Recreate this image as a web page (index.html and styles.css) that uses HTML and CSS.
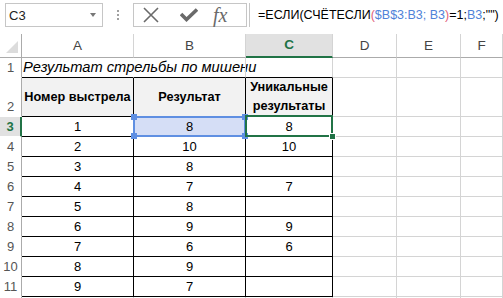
FILE: index.html
```html
<!DOCTYPE html>
<html lang="ru">
<head>
    <meta charset="UTF-8">
    <title>Уникальные результаты</title>
    <link rel="stylesheet" href="styles.css">
</head>
<body>
    <div class="toolbar">
        <div class="namebox">
            <span>C3</span>
            <span class="arrow"></span>
        </div>
        <div class="grip">
            <svg width="4" height="14" viewBox="0 0 4 14">
                <rect x="1" y="2" width="2" height="2" fill="#a0a0a0"/>
                <rect x="1" y="6" width="2" height="2" fill="#a0a0a0"/>
                <rect x="1" y="10" width="2" height="2" fill="#a0a0a0"/>
            </svg>
        </div>
        <div class="fxbtns">
            <svg class="btn-x" width="16" height="16" viewBox="0 0 16 16">
                <path d="M1 1 L15 15 M15 1 L1 15" stroke="#6a6a6a" stroke-width="1.6" fill="none"/>
            </svg>
            <svg class="btn-ok" width="18" height="14" viewBox="0 0 18 14">
                <path d="M1 6 L6.5 11.5 L17 1.5" stroke="#6a6a6a" stroke-width="3.6" fill="none"/>
            </svg>
            <span class="btn-fx">fx</span>
        </div>
        <div class="formula">=ЕСЛИ(СЧЁТЕСЛИ<span class="par">(</span><span class="ref">$B$3:B3; B3</span><span class="par">)</span>=1;<span class="ref">B3</span>;"")</div>
    </div>

    <div class="sheet">
        <div class="row head">
            <div class="cell corner">
                <svg width="21" height="23" viewBox="0 0 21 23"><polygon points="18,7 18,19 6,19" fill="#dcdcdc"/></svg>
            </div>
            <div class="cell ch">A</div>
            <div class="cell ch">B</div>
            <div class="cell ch sel">C</div>
            <div class="cell ch">D</div>
            <div class="cell ch">E</div>
            <div class="cell ch">F</div>
        </div>
        <div class="row">
            <div class="cell rh">1</div>
            <div class="cell title nr bb">Результат стрельбы по мишени</div>
            <div class="cell bb"></div>
            <div class="cell bb"></div>
            <div class="cell"></div>
            <div class="cell"></div>
            <div class="cell"></div>
        </div>
        <div class="row tall">
            <div class="cell rh">2</div>
            <div class="cell t hd">Номер выстрела</div>
            <div class="cell t hd">Результат</div>
            <div class="cell t hd wrap">Уникальные результаты</div>
            <div class="cell"></div>
            <div class="cell"></div>
            <div class="cell"></div>
        </div>
        <div class="row">
            <div class="cell rh sel">3</div>
            <div class="cell t">1</div>
            <div class="cell t range">8
                <span class="hl"></span>
                <span class="knob k-tl"></span><span class="knob k-tr"></span>
                <span class="knob k-bl"></span><span class="knob k-br"></span>
            </div>
            <div class="cell t active">8
                <span class="frame"></span>
                <span class="fill-handle"></span>
            </div>
            <div class="cell"></div>
            <div class="cell"></div>
            <div class="cell"></div>
        </div>
        <div class="row">
            <div class="cell rh">4</div>
            <div class="cell t">2</div>
            <div class="cell t">10</div>
            <div class="cell t">10</div>
            <div class="cell"></div><div class="cell"></div><div class="cell"></div>
        </div>
        <div class="row">
            <div class="cell rh">5</div>
            <div class="cell t">3</div>
            <div class="cell t">8</div>
            <div class="cell t"></div>
            <div class="cell"></div><div class="cell"></div><div class="cell"></div>
        </div>
        <div class="row">
            <div class="cell rh">6</div>
            <div class="cell t">4</div>
            <div class="cell t">7</div>
            <div class="cell t">7</div>
            <div class="cell"></div><div class="cell"></div><div class="cell"></div>
        </div>
        <div class="row">
            <div class="cell rh">7</div>
            <div class="cell t">5</div>
            <div class="cell t">8</div>
            <div class="cell t"></div>
            <div class="cell"></div><div class="cell"></div><div class="cell"></div>
        </div>
        <div class="row">
            <div class="cell rh">8</div>
            <div class="cell t">6</div>
            <div class="cell t">9</div>
            <div class="cell t">9</div>
            <div class="cell"></div><div class="cell"></div><div class="cell"></div>
        </div>
        <div class="row">
            <div class="cell rh">9</div>
            <div class="cell t">7</div>
            <div class="cell t">6</div>
            <div class="cell t">6</div>
            <div class="cell"></div><div class="cell"></div><div class="cell"></div>
        </div>
        <div class="row">
            <div class="cell rh">10</div>
            <div class="cell t">8</div>
            <div class="cell t">9</div>
            <div class="cell t"></div>
            <div class="cell"></div><div class="cell"></div><div class="cell"></div>
        </div>
        <div class="row">
            <div class="cell rh">11</div>
            <div class="cell t">9</div>
            <div class="cell t">7</div>
            <div class="cell t"></div>
            <div class="cell"></div><div class="cell"></div><div class="cell"></div>
        </div>
        <div class="row stub">
            <div class="cell rh"></div>
            <div class="cell"></div><div class="cell"></div><div class="cell"></div>
            <div class="cell"></div><div class="cell"></div><div class="cell"></div>
        </div>
    </div>
</body>
</html>
```

FILE: styles.css
```css
body {
    margin: 0;
    width: 503px;
    height: 298px;
    overflow: hidden;
    background-color: #fff;
    font-family: "Liberation Sans", Arial, sans-serif;
    color: #000;
}
.toolbar {
    display: flex;
    height: 24px;
    padding: 3px 0 0 5px;
}
.namebox {
    box-sizing: border-box;
    width: 98px;
    height: 24px;
    border: 1px solid #c6c6c6;
    display: flex;
    align-items: center;
    justify-content: space-between;
    padding: 0 6px 0 3px;
    font-size: 13px;
    color: #222;
}
.arrow {
    width: 0;
    height: 0;
    border-left: 3.5px solid transparent;
    border-right: 3.5px solid transparent;
    border-top: 4px solid #777;
}
.grip {
    width: 30px;
    display: flex;
    align-items: center;
    justify-content: center;
}
.fxbtns {
    box-sizing: border-box;
    width: 114px;
    height: 24px;
    border: 1px solid #c6c6c6;
    display: flex;
    align-items: center;
}
.btn-x {
    margin-left: 9px;
}
.btn-ok {
    margin-left: 21px;
}
.btn-fx {
    margin-left: 15px;
    font-family: "Liberation Serif", "Times New Roman", serif;
    font-style: italic;
    font-size: 20px;
    color: #6a6a6a;
    line-height: 22px;
}
.formula {
    flex: 1;
    margin-left: 2px;
    border-left: 1px solid #c6c6c6;
    padding-left: 8px;
    height: 24px;
    line-height: 24px;
    font-size: 12.5px;
    white-space: nowrap;
    overflow: hidden;
}
.ref {
    color: #4f82d8;
}
.par {
    color: #e0607a;
}

.sheet {
    margin-top: 7px;
}
.row {
    display: grid;
    grid-template-columns: 22px 112px 112px 87px 64px 64px 1fr;
    height: 20px;
}
.row.head {
    height: 24px;
}
.row.tall {
    height: 39px;
}
.row.stub {
    height: 2px;
}
.cell {
    box-sizing: border-box;
    border-right: 1px solid #d4d4d4;
    border-bottom: 1px solid #d4d4d4;
    text-align: center;
    font-size: 13px;
    line-height: 19px;
    white-space: nowrap;
}
.row.stub .cell {
    border-bottom: none;
}
.corner {
    border-right-color: #ababab;
    border-bottom-color: #ababab;
}
.corner svg {
    display: block;
}
.ch {
    border-bottom-color: #ababab;
    line-height: 23px;
    font-size: 13.5px;
    color: #444;
}
.ch.sel {
    background-color: #e1e1e1;
    color: #217346;
    font-weight: bold;
    border-bottom: 2px solid #217346;
    line-height: 22px;
}
.rh {
    border-right-color: #ababab;
    border-bottom-color: #fff;
    color: #555;
    display: flex;
    flex-direction: column;
    justify-content: flex-end;
}
.rh.sel {
    background-color: #e1e1e1;
    color: #217346;
    font-weight: bold;
    border-right: 2px solid #217346;
}
.title {
    text-align: left;
    padding-left: 1px;
    font-style: italic;
    font-size: 14.7px;
    overflow: visible;
}
.nr {
    border-right-color: transparent;
}
.bb {
    border-bottom-color: #000;
}
.t {
    border-right-color: #000;
    border-bottom-color: #000;
}
.hd {
    background-color: #f2f2f2;
    font-weight: bold;
    font-size: 12.7px;
    line-height: 38px;
}
.hd.wrap {
    white-space: normal;
    line-height: 19px;
}

.range {
    position: relative;
    background-color: #d5def6;
}
.hl {
    position: absolute;
    left: -1px;
    top: -1px;
    right: -1px;
    bottom: -1px;
    border: 2px solid #5f8fe2;
}
.knob {
    position: absolute;
    width: 6px;
    height: 6px;
    background-color: #5f8fe2;
}
.k-tl { left: -3px; top: -3px; }
.k-tr { right: -3px; top: -3px; }
.k-bl { left: -3px; bottom: -3px; }
.k-br { right: -3px; bottom: -3px; }
.active {
    position: relative;
}
.frame {
    position: absolute;
    left: -1px;
    top: -2px;
    right: -1px;
    bottom: -1px;
    border: 2px solid #217346;
}
.fill-handle {
    position: absolute;
    right: -4px;
    bottom: -4px;
    width: 5px;
    height: 5px;
    background-color: #217346;
    border: 1px solid #fff;
}
```
